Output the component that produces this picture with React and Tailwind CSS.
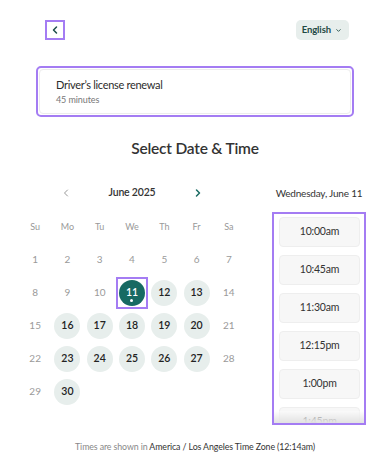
import { ChevronLeft, ChevronRight, ChevronDown } from 'lucide-react';

const weekdays = ['Su', 'Mo', 'Tu', 'We', 'Th', 'Fr', 'Sa'];
const available = [12, 13, 16, 17, 18, 19, 20, 23, 24, 25, 26, 27, 30];
const slots = ['10:00am', '10:45am', '11:30am', '12:15pm', '1:00pm', '1:45pm'];

// June 2025 starts on a Sunday
const days = Array.from({ length: 30 }, (_, i) => i + 1);

const Day = ({ day }) => {
  if (day === 11) {
    return (
      <div className="flex h-[33px] items-center justify-center">
        <div className="flex h-[28px] w-[28px] items-center justify-center outline-2 outline-[#a47cf3]">
          <div className="relative flex h-[26px] w-[26px] items-center justify-center rounded-full bg-[#176a62] text-[10.5px] font-semibold text-white">
            11
            <span className="absolute bottom-[4px] h-[3px] w-[3px] rounded-full bg-white"></span>
          </div>
        </div>
      </div>
    );
  }
  const isAvailable = available.includes(day);
  return (
    <div className="flex h-[33px] items-center justify-center">
      {isAvailable ? (
        <div className="flex h-[26px] w-[26px] items-center justify-center rounded-full bg-[#e7eeec] text-[10.5px] font-semibold text-[#222]">
          {day}
        </div>
      ) : (
        <span className="text-[10px] text-[#9a9a9a]">{day}</span>
      )}
    </div>
  );
};

export default function App() {
  return (
    <div className="relative h-[469px] w-[390px] overflow-hidden bg-white font-['Lato','Noto_Sans',sans-serif] text-[#333]">
      <div className="flex items-center justify-between pl-[47px] pr-[41px] pt-[20px]">
        <button className="flex h-[16px] w-[16px] items-center justify-center outline-2 outline-[#a47cf3]">
          <ChevronLeft size={12} strokeWidth={3} className="text-[#1c4e49]" />
        </button>
        <button className="flex h-[20px] items-center gap-[4px] rounded-[5px] bg-[#e7eeec] pl-[6px] pr-[7px] text-[9.5px] font-bold tracking-[-0.1px] text-[#1f4a45]">
          English
          <ChevronDown size={7} strokeWidth={3} />
        </button>
      </div>

      <div className="mx-[38px] mt-[28px] rounded-[3px] bg-white p-[1px] outline-2 outline-[#a47cf3]">
        <div className="flex h-[45px] flex-col justify-center rounded-[4px] border border-[#ececec] pl-[16px]">
          <p className="text-[11px] leading-[15px] tracking-[-0.3px] text-[#2c2c2c]">Driver’s license renewal</p>
          <p className="mt-[1px] text-[9px] leading-[13px] tracking-[-0.1px] text-[#777]">45 minutes</p>
        </div>
      </div>

      <h1 className="mt-[22px] text-center text-[15.5px] font-semibold leading-[22px] tracking-[-0.2px] text-[#333]">
        Select Date &amp; Time
      </h1>

      <div className="mt-[24px] flex pl-[19px] pr-[26px]">
        <div className="w-[226px]">
          <div className="flex h-[20px] items-center justify-between px-[41px]">
            <ChevronLeft size={12} strokeWidth={2} className="text-[#999]" />
            <span className="text-[10.5px] font-semibold tracking-[-0.2px] text-[#333]">June 2025</span>
            <ChevronRight size={12} strokeWidth={3} className="text-[#1a6b63]" />
          </div>
          <div className="mt-[7px] grid grid-cols-7">
            {weekdays.map((w) => (
              <div key={w} className="flex h-[33px] items-center justify-center text-[9px] text-[#999]">
                {w}
              </div>
            ))}
            {days.map((d) => (
              <Day key={d} day={d} />
            ))}
          </div>
        </div>

        <div className="ml-[29px] flex-1">
          <div className="flex h-[20px] items-center justify-center whitespace-nowrap text-[10px] tracking-[-0.2px] text-[#333]">
            Wednesday, June 11
          </div>
          <div className="relative mt-[11px] h-[209px] overflow-hidden outline-2 outline-[#a47cf3]">
            <div className="flex flex-col gap-[8px] pl-[5px] pr-[4px] pt-[3px]">
              {slots.map((s) => (
                <div
                  key={s}
                  className="flex h-[30px] items-center justify-center rounded-[4px] border border-[#eeeeee] bg-[#f7f7f7] text-[10.5px] tracking-[-0.2px] text-[#333]"
                >
                  {s}
                </div>
              ))}
            </div>
            <div className="absolute bottom-0 left-0 right-0 h-[12px] bg-gradient-to-b from-white/40 to-[#e2e2e2]"></div>
          </div>
        </div>
      </div>

      <p className="mt-[17px] text-center text-[8.8px] tracking-[-0.1px] text-[#333]">
        <span className="text-[#888]">Times are shown in </span>
        America / Los Angeles Time Zone (12:14am)
      </p>
    </div>
  );
}
